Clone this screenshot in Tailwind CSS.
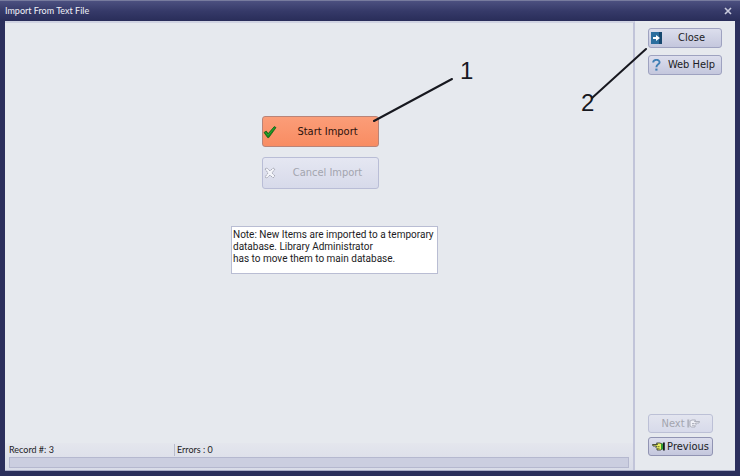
<!DOCTYPE html>
<html lang="en" class="h-full">
<head>
    <meta charset="UTF-8">
    <meta name="viewport" content="width=device-width, initial-scale=1.0">
    <title>Import From Text File</title>
    <script src="https://cdn.jsdelivr.net/npm/@tailwindcss/browser@4"></script>
</head>
<body class="relative h-full min-h-screen flex flex-col bg-[#2b2f5c] font-['DejaVu_Sans_Condensed','DejaVu_Sans',sans-serif] text-[#1c1c24] overflow-hidden">
    <!-- Title bar -->
    <header class="h-[21px] shrink-0 flex items-center justify-between pl-[5px] pr-2 border-t border-[#777b9e] bg-linear-to-b from-[#4c5080] via-[#363a69] to-[#292d59]">
        <h1 class="font-['Lato',sans-serif] text-[9px] leading-4 text-[#f0f1f8]">Import From Text File</h1>
        <button type="button" aria-label="Close window" class="text-[#c9cbdd]">
            <svg class="size-2" viewBox="0 0 8 8" fill="none" stroke="currentColor" stroke-width="1.6">
                <path d="M1 1l6 6M7 1L1 7" />
            </svg>
        </button>
    </header>

    <div class="flex-1 flex mx-[5px] mb-[5px] bg-[#e6e9ee] border-b border-[#a9adc8]">
        <!-- Import panel -->
        <main class="flex-1 flex flex-col border-r-2 border-[#c1c4d9] border-t-2 border-t-[#d0d3e2]">
            <div class="flex-1 flex flex-col items-center pt-[93px] pl-[3px]">
                <button type="button" class="w-[117px] h-[31px] flex items-center rounded-[3px] border border-[#b98478] bg-linear-to-b from-[#fb9d78] to-[#f88c62] text-[11px] text-[#2b120c]">
                    <svg class="size-[14px]" viewBox="0 0 14 14">
                        <path d="M1 7.5L3.2 6l2 2.6L11.3 1.6l1.7 1L5.8 12.6H4.6z" fill="#128a1c" stroke="#0b5512" stroke-width=".7" />
                        <path d="M2.4 7.3l2.6 3L11.6 2.6" fill="none" stroke="#4fc04a" stroke-width=".5" />
                    </svg>
                    <span class="flex-1 pt-px text-center">Start Import</span>
                </button>
                <button type="button" disabled class="w-[117px] h-8 mt-[10px] flex items-center rounded-[3px] border border-[#b9bdd6] bg-linear-to-b from-[#e5e7f2] to-[#d7daea] text-[11px] text-[#a3a5ae]">
                    <svg class="size-[14px]" viewBox="0 0 14 14" fill="none">
                        <path d="M2 3l2-1 3 3 3-3 2 1-3 4 3 3-2 2-3-3-3 3-2-1 3-4z" fill="#f4f5fa" stroke="#a3a5b2" stroke-width=".9" stroke-dasharray="2 .6" />
                    </svg>
                    <span class="flex-1 pt-px text-center">Cancel Import</span>
                </button>
                <p class="w-[207px] h-12 mt-[37px] ml-7 pl-px pt-[2px] bg-white border border-[#b9bdd3] font-['Roboto',sans-serif] text-[10px] leading-3 whitespace-nowrap">
                    Note: New Items are imported to a temporary<br>
                    database. Library Administrator<br>
                    has to move them to main database.
                </p>
            </div>
            <!-- Status bar -->
            <footer class="px-1 pb-[2px] bg-linear-to-b from-[#e4e6ed] to-[#d9dce8]">
                <div class="h-[14px] flex items-center font-['Lato',sans-serif] text-[9px] leading-3">
                    <span class="w-[165px]">Record #: 3</span>
                    <span class="pl-[2px] border-l border-[#b9bccb]">Errors : 0</span>
                </div>
                <div role="progressbar" aria-label="Import progress" aria-valuenow="0" class="h-[11px] border border-[#b5b8cf] bg-[#cbcee0]"></div>
            </footer>
        </main>

        <!-- Side buttons -->
        <aside class="w-[100px] flex flex-col items-start pl-[13px] pt-[7px] pb-[14px]">
            <button type="button" class="w-[74px] h-5 flex items-center pl-[2px] rounded-[3px] border border-[#9ea2c0] bg-linear-to-b from-[#dcdeed] to-[#c4c7dd] text-[11px]">
                <svg class="w-[11px] h-3" viewBox="0 0 11 12">
                    <path d="M0 0h11v12H0z" fill="#2b6e9e" />
                    <path d="M8 0h3v12H8z" fill="#17486f" />
                    <path d="M2 5h3V3l4 3-4 3V7H2z" fill="#fff" />
                </svg>
                <span class="flex-1 pt-px text-center">Close</span>
            </button>
            <button type="button" class="w-[74px] h-5 mt-[7px] flex items-center pl-[2px] rounded-[3px] border border-[#9ea2c0] bg-linear-to-b from-[#dcdeed] to-[#c4c7dd] text-[11px] whitespace-nowrap">
                <svg class="w-[11px] h-3" viewBox="0 0 11 12" fill="none">
                    <path d="M2.2 3.6C2.2 0 8.6 0 8.6 3.3 8.6 5.4 5.4 5.4 5.4 8.2" stroke="#3f7fb5" stroke-width="1.9" />
                    <path d="M4.3 9.6h2.2v2H4.3z" fill="#3f7fb5" />
                </svg>
                <span class="flex-1 pt-px text-center">Web Help</span>
            </button>
            <button type="button" disabled class="w-[65px] h-[19px] mt-auto flex items-center justify-center gap-[2px] rounded-[3px] border border-[#bcc0d6] bg-linear-to-b from-[#e3e5ef] to-[#d7daea] text-[11px] text-[#a3a5ae]">
                <span class="pt-px">Next</span>
                <svg class="w-[13px] h-[9px]" viewBox="0 0 13 9">
                    <path d="M12.5 2.5H7.5L8.5 1H5L3 2v5l1.5 1H8V6.5L9 5.5 8.5 4H12z" fill="#f0f1f7" stroke="#a0a2ae" stroke-width=".8" />
                    <path d="M7.5 4.5H5M7.5 6.3H5" stroke="#a0a2ae" stroke-width=".8" />
                    <path d="M.3.5h2v8h-2z" fill="#b0b2be" />
                </svg>
            </button>
            <button type="button" class="w-[65px] h-[19px] mt-1 flex items-center justify-center gap-[2px] rounded-[3px] border border-[#9194b3] bg-linear-to-b from-[#dcdeed] to-[#c4c7dd] text-[11px]">
                <svg class="w-[13px] h-[9px]" viewBox="0 0 13 9">
                    <path d="M.5 2.5H5.5L4.5 1H8l2 1v5L8.5 8H5V6.5L4 5.5 4.5 4H1z" fill="#e9ee62" stroke="#22281c" stroke-width=".8" />
                    <path d="M5.5 4.5h2M5.5 6.3h2" stroke="#3b401c" stroke-width=".6" />
                    <path d="M9 1.5h2v6H9z" fill="#2e9a35" />
                    <path d="M11 .5h1.8v8H11z" fill="#17171c" />
                </svg>
                <span class="pt-px">Previous</span>
            </button>
        </aside>
    </div>

    <!-- Callouts -->
    <svg class="absolute left-0 top-0 w-[740px] h-[476px] pointer-events-none" viewBox="0 0 740 476" fill="none">
        <path d="M374 121L452 79M592 98L646 49" stroke="#17181f" stroke-width="2" stroke-linecap="round" />
        <text x="460" y="79" class="font-['Liberation_Sans',sans-serif] text-[24px]" fill="#17181f">1</text>
        <text x="581" y="111" class="font-['Liberation_Sans',sans-serif] text-[24px]" fill="#17181f">2</text>
    </svg>
</body>
</html>
